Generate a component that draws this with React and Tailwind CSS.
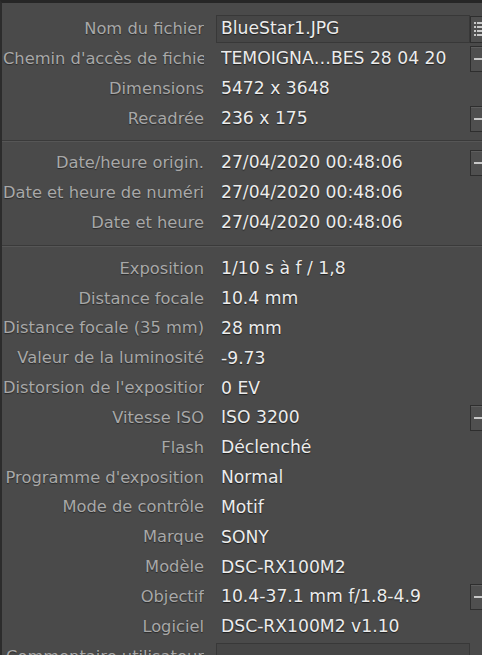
import React from "react";

const font = { fontFamily: '"DejaVu Sans", "Noto Sans", "Liberation Sans", sans-serif' };

function MinusBtn() {
  return (
    <div className="w-[20px] h-[26px] border border-[#2e2e2e] bg-[#4f4f4f] shrink-0 flex items-center justify-start pl-[3px] shadow-[inset_0_1px_0_#5e5e5e]">
      <div className="w-[10px] h-[2px] bg-[#c8c8c8]" />
    </div>
  );
}

function ListBtn() {
  return (
    <div className="w-[20px] h-[27px] border border-[#2e2e2e] bg-[#4f4f4f] shrink-0 flex flex-col justify-center gap-[2px] pl-[3px]">
      {[0, 1, 2, 3].map((i) => (
        <div key={i} className="flex gap-[1px] items-center">
          <div className="w-[2px] h-[2px] bg-[#c8c8c8]" />
          <div className="w-[8px] h-[2px] bg-[#c8c8c8]" />
        </div>
      ))}
    </div>
  );
}

function Row({ label, value, btn, field, h = "h-[30px]" }) {
  return (
    <div className={h + " flex items-center"}>
      <div className="w-[202px] pl-[1px] shrink-0 overflow-hidden whitespace-nowrap text-right text-[16.3px] text-[#a8a8a8] [text-shadow:0_1px_1px_rgba(0,0,0,0.45)]">
        {label}
      </div>
      {field ? (
        <div className="ml-[12px] w-[254px] h-[28px] border border-[#383838] bg-[#464646] flex items-center pl-[4px] text-[17.2px] text-[#ececec] whitespace-nowrap [text-shadow:0_1px_1px_rgba(0,0,0,0.6)]">
          {value}
        </div>
      ) : (
        <div className="ml-[17px] w-[249px] whitespace-nowrap overflow-hidden text-[17.2px] text-[#ececec] [text-shadow:0_1px_1px_rgba(0,0,0,0.6)]">
          {value}
        </div>
      )}
      <div className="w-[24px] flex items-center">
        {btn === "minus" && <MinusBtn />}
        {btn === "list" && <ListBtn />}
      </div>
    </div>
  );
}

function Sep() {
  return <div className="border-t border-[#3a3a3a] border-b border-b-[#565656]" />;
}

export default function App() {
  const g1 = [
    ["Nom du fichier", "BlueStar1.JPG", "list", true],
    ["Chemin d'accès de fichier", "TEMOIGNA…BES 28 04 20", "minus"],
    ["Dimensions", "5472 x 3648"],
    ["Recadrée", "236 x 175", "minus"],
  ];
  const g2 = [
    ["Date/heure origin.", "27/04/2020 00:48:06", "minus"],
    ["Date et heure de numérisation", "27/04/2020 00:48:06"],
    ["Date et heure", "27/04/2020 00:48:06"],
  ];
  const g3 = [
    ["Exposition", "1/10 s à f / 1,8"],
    ["Distance focale", "10.4 mm"],
    ["Distance focale (35 mm)", "28 mm"],
    ["Valeur de la luminosité", "-9.73"],
    ["Distorsion de l'exposition", "0 EV"],
    ["Vitesse ISO", "ISO 3200", "minus"],
    ["Flash", "Déclenché"],
    ["Programme d'exposition", "Normal"],
    ["Mode de contrôle", "Motif"],
    ["Marque", "SONY"],
    ["Modèle", "DSC-RX100M2"],
    ["Objectif", "10.4-37.1 mm f/1.8-4.9", "minus"],
    ["Logiciel", "DSC-RX100M2 v1.10"],
  ];
  return (
    <div
      className="w-[482px] h-[655px] overflow-hidden bg-[#4a4a4a] border-t-[3px] border-t-[#262626] border-l-2 border-l-[#2c2c2c] text-[16.5px] leading-none"
      style={font}
    >
      <div className="w-[520px]">
        <div className="pt-[11px] pb-[6px]">
          {g1.map(([l, v, b, f]) => (
            <Row key={l} label={l} value={v} btn={b} field={f} />
          ))}
        </div>
        <Sep />
        <div className="pt-[6px] pb-[7px]">
          {g2.map(([l, v, b]) => (
            <Row key={l} label={l} value={v} btn={b} />
          ))}
        </div>
        <Sep />
        <div className="pt-[7px]">
          {g3.map(([l, v, b]) => (
            <Row key={l} label={l} value={v} btn={b} h="h-[29.83px]" />
          ))}
          <Row label="Commentaire utilisateur" value="" field h="h-[29.83px]" />
        </div>
      </div>
    </div>
  );
}
